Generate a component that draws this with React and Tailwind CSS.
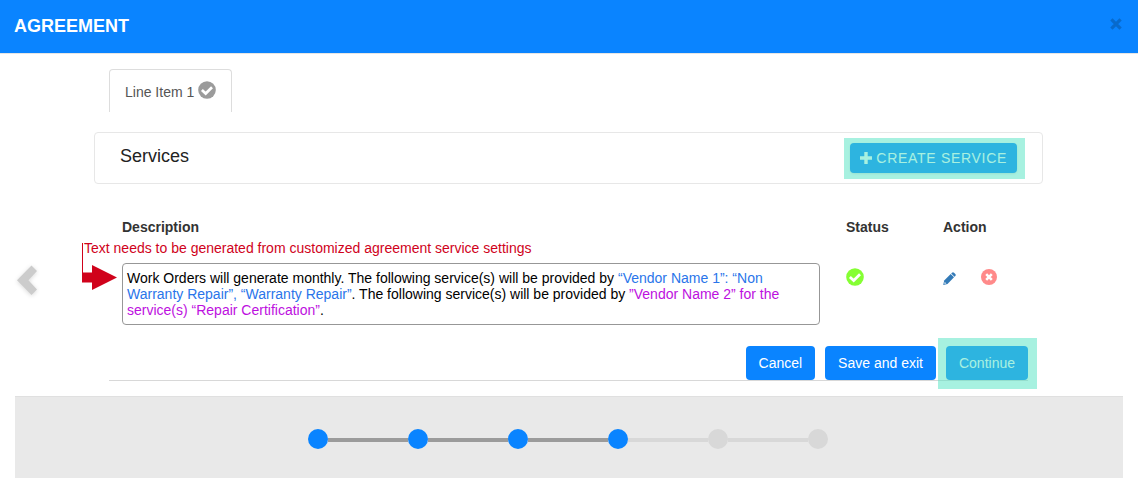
import React from "react";

function CheckBadge({ className, label }) {
  return (
    <svg viewBox="0 0 18 18" className={className} role="img" aria-label={label}>
      <circle cx="9" cy="9" r="8.8" fill="currentColor" />
      <path d="M3.900 8.900 7.700 12.500 14 6.200" fill="none" stroke="#fff" strokeWidth="2.700" />
    </svg>
  );
}

function Highlight({ className }) {
  return <span aria-hidden="true" className={`pointer-events-none absolute bg-[#50e3c2]/50 ${className}`} />;
}

function PrimaryButton({ children }) {
  return (
    <button type="button" className="h-[34px] rounded bg-[#0a84ff] px-[13px] text-sm text-white">
      {children}
    </button>
  );
}

function Header() {
  return (
    <header className="flex h-[54px] items-center justify-between border-b border-[#e5e5e5] bg-[#0a84ff] pr-[15px] pb-px pl-[14px]">
      <h1 className="text-lg font-bold text-white">AGREEMENT</h1>
      <button type="button" aria-label="Close" className="mb-1 p-px">
        <svg viewBox="0 0 12 12" className="size-3" fill="none" stroke="#086acc" strokeWidth="3.2">
          <path d="M1.4 1.4 10.6 10.6M10.6 1.4 1.4 10.6" />
        </svg>
      </button>
    </header>
  );
}

function ServicesTable() {
  return (
    <table className="w-full table-fixed text-left text-sm text-[#333]">
      <colgroup>
        <col />
        <col className="w-[97px]" />
        <col className="w-[85px]" />
      </colgroup>
      <thead>
        <tr className="h-[46px] align-top leading-5">
          <th className="pl-[13px] font-bold">Description</th>
          <th className="font-bold">Status</th>
          <th className="font-bold">Action</th>
        </tr>
      </thead>
      <tbody>
        <tr className="align-top">
          <td className="relative pr-[26px] pl-[13px]">
            <div className="rounded border border-[#979797] px-1 py-[6px] leading-4 text-black">
              Work Orders will generate monthly. The following service(s) will be provided by{" "}
              <span className="text-[#2a75ea]">“Vendor Name 1”: “Non Warranty Repair”, “Warranty Repair”</span>. The
              following service(s) will be provided by{" "}
              <span className="text-[#bd10e0]">”Vendor Name 2” for the service(s) “Repair Certification”</span>.
            </div>
            <p className="absolute -top-[25px] -left-[25px] leading-5 whitespace-nowrap text-[#d0021b]">
              Text needs to be generated from customized agreement service settings
            </p>
            <svg
              aria-hidden="true"
              viewBox="0 0 36 48"
              className="absolute -top-[20px] -left-[27px] h-12 w-9"
              fill="#d0021b"
            >
              <path d="M0 0h1v29.5h9V22l25 12.5L10 47v-7.500H0z" />
            </svg>
          </td>
          <td className="pt-[5px]">
            <CheckBadge label="Complete" className="size-[18px] text-[#85ff33]" />
          </td>
          <td className="pt-[5px]">
            <div className="flex items-center gap-[25px]">
              <button type="button" aria-label="Edit service" className="pt-1">
                <svg viewBox="0 0 13 13" className="size-[13px]" fill="#337ab7">
                  <path d="M9 .800q1-1 2 0l1.300 1.300q.9.900 0 1.900l-.8.800L8.200 1.500z" />
                  <path d="M7.700 2l3.300 3.300-6.500 6.600-4.300 1 1-4.400z" />
                  <path d="M1.700 9.700 3.400 11.400 1.300 11.900z" fill="#dce9f4" />
                </svg>
              </button>
              <button type="button" aria-label="Remove service">
                <svg viewBox="0 0 16 16" className="size-4">
                  <circle cx="8" cy="8" r="8" fill="#ff8a8a" />
                  <path d="M5.200 5.200l5.600 5.600M10.800 5.200 5.200 10.800" stroke="#fff" strokeWidth="2.600" />
                </svg>
              </button>
            </div>
          </td>
        </tr>
      </tbody>
    </table>
  );
}

const steps = [true, true, true, true, false, false];

function Progress() {
  return (
    <footer className="mx-[15px] mt-[15px] flex h-[82px] justify-center border-t border-[#e0e0e0] bg-[#e9e9e9] pt-8 pr-0.5">
      <ol className="flex h-5 items-center" aria-label="Progress">
        {steps.map((done, i) => (
          <li key={i} className="flex items-center">
            {i > 0 && <span className={`mt-0.5 h-1 w-20 ${done ? "bg-[#9b9b9b]" : "bg-[#d8d8d8]"}`} />}
            <span className={`size-5 rounded-full ${done ? "bg-[#0a84ff]" : "bg-[#d8d8d8]"}`} />
          </li>
        ))}
      </ol>
    </footer>
  );
}

export default function App() {
  return (
    <div className="bg-white pb-[15px] font-['Liberation_Sans',Arial,sans-serif]">
      <Header />
      <main className="pt-[15px]">
        <nav className="px-[109px]">
          <a
            href="#line-item-1"
            className="inline-flex h-[43px] items-center gap-1 rounded-t border border-b-0 border-[#ddd] px-[15px] pt-0.5 align-top text-sm text-[#555]"
          >
            Line Item 1
            <CheckBadge className="mb-1 size-[18px] text-[#9b9b9b]" label="Complete" />
          </a>
        </nav>

        <section className="mr-[95px] ml-[94px] mt-5 flex h-[52px] items-center justify-between rounded border border-[#e7e7e7] px-[25px]">
          <h2 className="mb-1 text-lg text-[#222]">Services</h2>
          <div className="relative">
            <button
              type="button"
              className="flex h-[30px] items-center gap-1 rounded bg-[#0a84ff] px-[10px] text-sm tracking-wider text-white shadow"
            >
              <svg viewBox="0 0 12 12" className="size-3" stroke="currentColor" strokeWidth="3.400">
                <path d="M0 6h12M6 0v12" />
              </svg>
              CREATE SERVICE
            </button>
            <Highlight className="-top-[5px] -right-2 -bottom-[6px] -left-[6px]" />
          </div>
        </section>

        <div className="mt-[33px] flex items-start pr-[110px]">
          <div className="w-[109px] shrink-0 pt-12 pl-[17px]">
            <button type="button" aria-label="Previous" className="block">
              <svg viewBox="0 0 21 31" className="h-[31px] w-[21px] drop-shadow-sm" fill="#ccc">
                <path d="M14.500.500 20 6 11.400 15.200 20 24.500 14.500 30 0 15.200z" />
              </svg>
            </button>
          </div>
          <div className="min-w-0 flex-1">
            <ServicesTable />
            <div className="mt-[21px] flex justify-end gap-[10px] border-b border-[#d8d8d8]">
              <PrimaryButton>Cancel</PrimaryButton>
              <PrimaryButton>Save and exit</PrimaryButton>
              <div className="relative">
                <PrimaryButton>Continue</PrimaryButton>
                <Highlight className="-top-2 -right-[9px] -bottom-[9px] -left-2" />
              </div>
            </div>
          </div>
        </div>
      </main>
      <Progress />
    </div>
  );
}
